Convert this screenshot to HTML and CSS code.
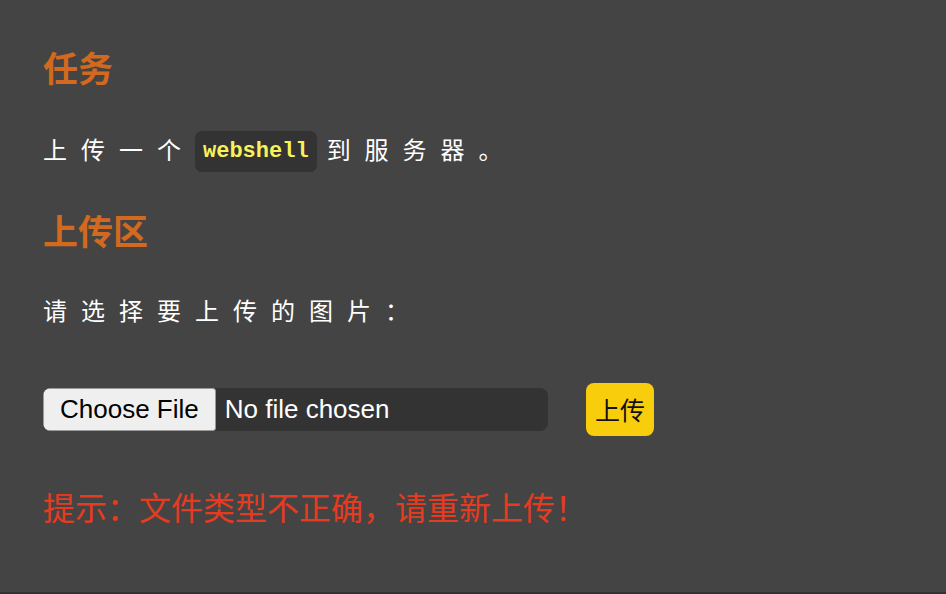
FILE: index.html
```html
<!DOCTYPE html>
<html lang="zh-CN">
<head>
<meta charset="utf-8">
<title>上传</title>
<link rel="stylesheet" href="styles.css">
</head>
<body>
<main class="page">
  <h2 class="title title-task">任务</h2>
  <p class="text text-task">上传一个<code class="code">webshell</code>到服务器。</p>
  <h2 class="title title-upload">上传区</h2>
  <p class="text text-choose">请选择要上传的图片：</p>
  <form class="upload-row">
    <input class="file" type="file" name="upload_file">
    <button class="submit" type="button">上传</button>
  </form>
  <p class="error">提示：文件类型不正确，请重新上传！</p>
</main>
</body>
</html>
```

FILE: styles.css
```css
html, body {
  margin: 0;
  padding: 0;
}
body {
  background: #333;
  font-family: "Noto Sans CJK SC", "Noto Sans", sans-serif;
}
.page {
  box-sizing: border-box;
  height: 592px;
  background: #444;
  padding: 47px 43px 0;
  display: flex;
  flex-direction: column;
  align-items: flex-start;
}
.title {
  margin: 0;
  font-size: 35px;
  line-height: 40px;
  font-weight: 700;
  color: #d2691e;
}
.title-upload {
  margin-top: 38px;
}
.text {
  margin: 40px 0 0;
  font-size: 24px;
  line-height: 44px;
  letter-spacing: 14px;
  font-weight: 400;
  color: #fff;
}
.text-choose {
  margin-top: 38px;
}
.code {
  display: inline-block;
  vertical-align: middle;
  margin: -2px 10px 0 0;
  padding: 0 8px;
  height: 41px;
  line-height: 41px;
  border-radius: 7px;
  background: #333;
  color: #f8f25a;
  font-family: "Liberation Mono", monospace;
  font-weight: 700;
  font-size: 22px;
  letter-spacing: 0;
}
.upload-row {
  margin-top: 51px;
  display: flex;
  align-items: center;
  gap: 38px;
}
.file {
  box-sizing: border-box;
  width: 505px;
  height: 43px;
  border: none;
  border-radius: 8px;
  background: #333;
  color: #fff;
  font-family: "Liberation Sans", Arial, sans-serif;
  font-size: 26px;
  padding: 0;
}
.file::file-selector-button {
  box-sizing: border-box;
  height: 43px;
  margin: 0 9px 0 0;
  padding: 0 16px;
  border: 1px solid #9a9a9a;
  border-radius: 3px;
  background: #efefef;
  color: #000;
  font-family: "Liberation Sans", Arial, sans-serif;
  font-size: 26px;
}
.submit {
  height: 53px;
  padding: 0 9px;
  border: none;
  border-radius: 8px;
  background: #f8cd0c;
  color: #111;
  font-family: "Noto Sans CJK SC", sans-serif;
  font-size: 25px;
}
.error {
  margin: 48px 0 0;
  font-size: 32px;
  line-height: 44px;
  color: #e63b20;
}
```
